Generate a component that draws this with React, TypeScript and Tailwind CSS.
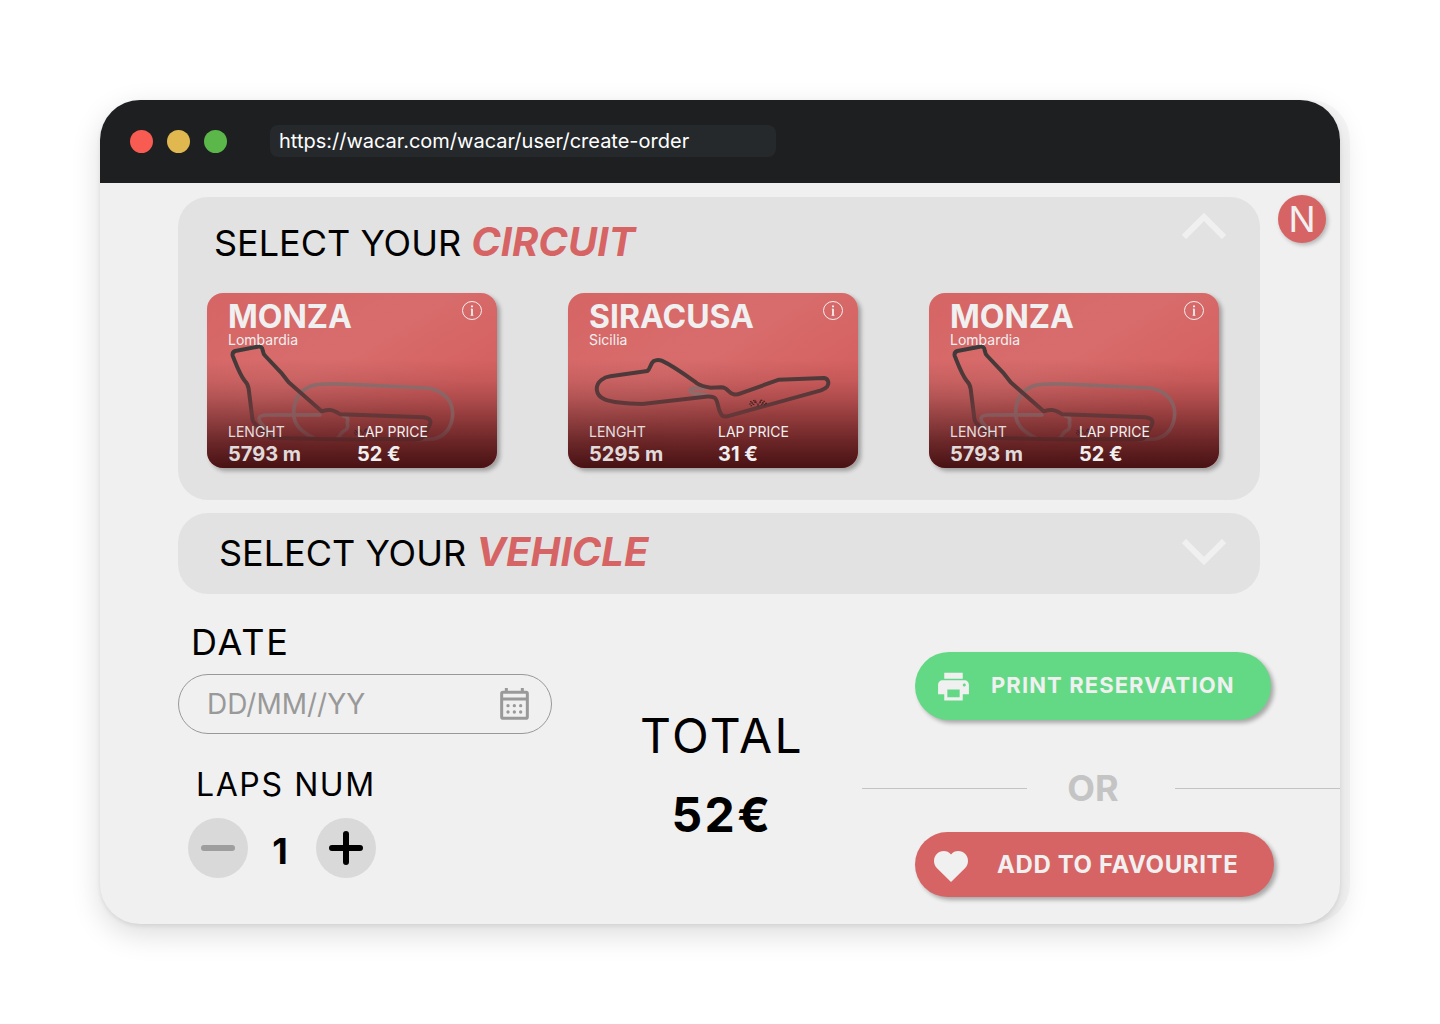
import { useState, type ReactNode } from "react";
import { MdPrint } from "react-icons/md";

type Circuit = {
  name: string;
  region: string;
  length: string;
  price: string;
  track: "monza" | "siracusa";
};

const circuits: Circuit[] = [
  { name: "MONZA", region: "Lombardia", length: "5793 m", price: "52 €", track: "monza" },
  { name: "SIRACUSA", region: "Sicilia", length: "5295 m", price: "31 €", track: "siracusa" },
  { name: "MONZA", region: "Lombardia", length: "5793 m", price: "52 €", track: "monza" },
];

/* Pair of crossed chequered flags marking the start line */
function Flags({ x, y }: { x: number; y: number }) {
  return (
    <g transform={`translate(${x} ${y})`} fill="#4a2426">
      <path d="M4 5h5v4H4zM13 2h5v4h-5zM8 9h5v4H8zM17 6h5v5h-5zM2 12h4v4H2zM12 13h5v4h-5zM6 17h4v4H6z" />
      <path d="M36 1h5v4h-5zM44 4h5v4h-5zM33 6h4v5h-4zM40 8h5v5h-5zM49 10h6v4h-6zM37 13h4v4h-4zM46 14h4v4h-4z" />
      <path d="M20 2l9 18M37 2L27 20" stroke="#4a2426" strokeWidth="2" />
    </g>
  );
}

/* Strokes that redden towards the bottom of the card */
function TrackPaints() {
  return (
    <defs>
      <linearGradient id="asphalt" gradientUnits="userSpaceOnUse" x1="0" y1="185" x2="0" y2="470">
        <stop offset="0" stopColor="#3c3a3a" />
        <stop offset="0.7" stopColor="#653839" />
        <stop offset="1" stopColor="#592628" />
      </linearGradient>
      <linearGradient id="old-asphalt" gradientUnits="userSpaceOnUse" x1="0" y1="290" x2="0" y2="470">
        <stop offset="0" stopColor="#8e6c6c" />
        <stop offset="0.6" stopColor="#86585a" />
        <stop offset="1" stopColor="#673436" />
      </linearGradient>
    </defs>
  );
}

function MonzaTrack() {
  return (
    <svg viewBox="21 24 870 525" className="absolute inset-0 h-full w-full" fill="none" strokeLinecap="round" strokeLinejoin="round" aria-hidden="true">
      <TrackPaints />
      <g stroke="url(#old-asphalt)" strokeWidth="11">
        <path d="M340 458C300 440 281 415 281 385C281 335 312 300 360 298C400 295 430 297 470 299L680 309C725 313 758 345 758 385C758 425 735 456 700 462L650 465" />
        <path d="M360 389.500L200 390C175 390 172 402 185 416L212 450M430 393C444 396 445 402 442 414C446 428 441 434 430 439C420 445 422 454 410 462" />
      </g>
      <path
        d="M494 464L212 459L168 419Q158 411 157 400L146 312Q144 296 134 287C120 270 110 242 98 212Q96 201 106 198L173 185Q187 183 188 196Q190 208 196 213L246 266L266 292L365 379Q378 375 390 375C404 375 410 384 422 388L670 397C690 399 695 408 689 420L673 451Q667 463 650 463L508 462"
        stroke="url(#asphalt)"
        strokeWidth="12"
      />
      <Flags x={460} y={430} />
    </svg>
  );
}

function SiracusaTrack() {
  return (
    <svg viewBox="27 24 870 525" className="absolute inset-0 h-full w-full" fill="none" strokeLinecap="round" strokeLinejoin="round" aria-hidden="true">
      <path d="M440 310H405C390 310 390 322 405 325L450 331" stroke="#8e6c6c" strokeWidth="11" />
      <path
        d="M265 258C274 252 274 236 283 229Q295 222 308 227C345 244 382 272 414 295Q428 304 455 308L487 307C508 308 508 325 524 328Q534 330 545 325L660 284L795 279C809 281 811 296 804 305Q799 311 786 316L505 394C490 396 488 392 482 379C474 356 476 343 466 338Q456 334 440 335L250 357C205 356 160 352 137 343C108 332 107 301 127 285Q138 276 154 274Z"
        stroke="url(#asphalt)"
        strokeWidth="12"
      />
      <Flags x={569} y={343} />
    </svg>
  );
}

function CircuitCard({ circuit }: { circuit: Circuit }) {
  return (
    <article className="relative h-[175px] w-[290px] overflow-hidden rounded-2xl bg-linear-to-br from-[#d66565] via-[#d86c6c] via-40% to-[#d56161] to-70% text-[#f0f0f0] shadow-[3px_3px_4px_rgba(0,0,0,0.3)]">
      <div className="absolute inset-0 bg-[linear-gradient(to_bottom,rgba(66,14,16,0)_38%,rgba(66,14,16,0.1)_50%,rgba(66,14,16,0.25)_60%,rgba(66,14,16,0.48)_72%,rgba(66,14,16,0.72)_85%,rgba(66,14,16,0.96)_100%)]" />
      {circuit.track === "monza" ? <MonzaTrack /> : <SiracusaTrack />}
      <div className="relative flex h-full flex-col justify-between pt-2 pr-3.5 pb-0.5 pl-[21px]">
        <div className="flex items-start justify-between">
          <div>
            <h3 className="text-[32px] leading-8 font-bold">{circuit.name}</h3>
            <p className="text-sm leading-[14px] font-normal">{circuit.region}</p>
          </div>
          <button type="button" aria-label={`About ${circuit.name}`}>
            <svg viewBox="0 0 22 20" className="h-5 w-[22px]" fill="none" stroke="#f0f0f0" aria-hidden="true">
              <ellipse cx="11" cy="9.5" rx="9.5" ry="9" />
              <path d="M11 7.800V14.500" strokeWidth="1.8" />
              <path d="M9.800 8.200H11M9.500 14.300h3" strokeWidth="0.8" />
              <path d="M10 5.300h2" strokeWidth="1.8" />
            </svg>
          </button>
        </div>
        <dl className="flex">
          <div className="w-[129px] opacity-90">
            <dt className="text-sm leading-5 font-normal">LENGHT</dt>
            <dd className="text-xl leading-6 font-bold">{circuit.length}</dd>
          </div>
          <div>
            <dt className="text-sm leading-5 font-normal">LAP PRICE</dt>
            <dd className="text-xl leading-6 font-bold">{circuit.price}</dd>
          </div>
        </dl>
      </div>
    </article>
  );
}

function Chevron({ up }: { up?: boolean }) {
  return (
    <svg viewBox="0 0 44 26" className="h-[26px] w-11" fill="none" stroke="#f0f0f0" strokeWidth="6" aria-hidden="true">
      <path d={up ? "M2 24L22 4L42 24" : "M2 2L22 22L42 2"} />
    </svg>
  );
}

function Heading({ children }: { children: ReactNode }) {
  return (
    <h2 className="text-4xl leading-[48px] font-normal whitespace-nowrap text-black">
      SELECT YOUR <em className="text-[40px] font-bold text-[#d76464]">{children}</em>
    </h2>
  );
}

function CalendarIcon() {
  return (
    <svg viewBox="989 234 87 96" className="h-8 w-[29px]" fill="none" stroke="#999" aria-hidden="true">
      <rect x="994" y="247" width="77" height="78" rx="4" strokeWidth="9" />
      <path d="M994 267h77" strokeWidth="9" />
      <path d="M1008 234v12M1056 234v12" strokeWidth="9" />
      <g fill="#999" stroke="none">
        {[1013, 1032, 1051].map((x) => (
          <g key={x}>
            <circle cx={x} cy="287" r="5" />
            <circle cx={x} cy="306" r="5" />
          </g>
        ))}
      </g>
    </svg>
  );
}

export default function App() {
  const [laps, setLaps] = useState(1);

  return (
    <div className="min-h-screen bg-white p-[100px] font-['Inter',sans-serif]">
      <div className="overflow-hidden rounded-[40px] bg-[#f0f0f0] pb-[27px] shadow-[0_2px_4px_rgba(0,0,0,0.08),10px_0_0_rgba(0,0,0,0.03),0_10px_30px_rgba(0,0,0,0.14)]">
        <header className="flex h-[83px] items-center bg-[#1e1f21] pb-px pl-[30px]">
          <div className="flex gap-3.5">
            <span className="size-[23px] rounded-full bg-[#f75b52]" />
            <span className="size-[23px] rounded-full bg-[#e0b84f]" />
            <span className="size-[23px] rounded-full bg-[#5cb74a]" />
          </div>
          <input
            aria-label="Address"
            defaultValue="https://wacar.com/wacar/user/create-order"
            className="ml-[43px] h-8 w-[506px] rounded-lg bg-[#25292c] px-[9px] text-xl font-normal text-white outline-none"
          />
        </header>

        <main>
          <div className="flex items-start pt-3 pr-3.5 pl-[78px]">
            <div className="mt-0.5 flex flex-1 flex-col gap-[13px]">
              <section className="rounded-[30px] bg-[#e2e2e2] pt-4 pr-[41px] pb-8 pl-[29px]">
                <div className="flex items-start justify-between pl-[7px]">
                  <div className="pt-[5px]">
                    <Heading>CIRCUIT</Heading>
                  </div>
                  <button type="button" aria-label="Collapse circuits" aria-expanded="true" className="-mr-[7px]">
                    <Chevron up />
                  </button>
                </div>
                <div className="mt-[26px] flex justify-between gap-4">
                  {circuits.map((circuit, index) => (
                    <CircuitCard key={index} circuit={circuit} />
                  ))}
                </div>
              </section>
              <section className="flex h-[81px] items-center justify-between rounded-[30px] bg-[#e2e2e2] pr-[34px] pb-[3px] pl-[41px]">
                <Heading>VEHICLE</Heading>
                <button type="button" aria-label="Expand vehicles" aria-expanded="false">
                  <Chevron />
                </button>
              </section>
            </div>
            <button
              type="button"
              aria-label="Account N"
              className="ml-[18px] size-12 rounded-full bg-[#d76464] text-4xl leading-[48px] font-normal text-[#f0f0f0] shadow-[2px_2px_4px_rgba(0,0,0,0.25)]"
            >
              N
            </button>
          </div>

          <form className="flex items-start justify-between pl-[78px]" onSubmit={(event) => event.preventDefault()}>
            <div className="w-[374px] pt-6">
              <label htmlFor="date" className="block pl-[13px] text-4xl leading-[48px] font-normal tracking-wider text-black">
                DATE
              </label>
              <div className="mt-2 flex h-[60px] items-center rounded-full border border-[#999] pr-[22px] pl-7">
                <input
                  id="date"
                  type="text"
                  placeholder="DD/MM//YY"
                  className="w-0 flex-1 bg-transparent text-[28px] font-normal text-black outline-none placeholder:text-[#999]"
                />
                <CalendarIcon />
              </div>
              <h2 className="mt-[29px] pl-[18px] text-[32px] leading-[44px] font-normal tracking-wider text-black">LAPS NUM</h2>
              <div className="mt-[11px] flex items-center pl-2.5">
                <button
                  type="button"
                  aria-label="Fewer laps"
                  onClick={() => setLaps(Math.max(1, laps - 1))}
                  className="flex size-[60px] items-center justify-center rounded-full bg-[#d9d9d9]"
                >
                  <span className="h-1.5 w-[34px] rounded-full bg-[#9e9e9e]" />
                </button>
                <output className="w-[68px] pt-1.5 pr-1 text-center text-4xl font-bold text-black">{laps}</output>
                <button
                  type="button"
                  aria-label="More laps"
                  onClick={() => setLaps(laps + 1)}
                  className="flex size-[60px] items-center justify-center rounded-full bg-[#d9d9d9]"
                >
                  <svg viewBox="0 0 34 34" className="size-[34px]" stroke="black" strokeWidth="6" strokeLinecap="round" aria-hidden="true">
                    <path d="M3 17h28M17 3v28" />
                  </svg>
                </button>
              </div>
            </div>

            <div className="pt-28 pl-[30px] text-center text-5xl leading-[60px] text-black">
              <h2 className="font-normal tracking-wider">TOTAL</h2>
              <p className="mt-[19px] font-bold tracking-wider">52€</p>
            </div>

            <div className="w-[478px] pt-[58px]">
              <button
                type="submit"
                className="ml-[53px] flex h-[68px] w-[356px] items-center rounded-full bg-[#63d985] pb-0.5 pl-5 text-[22px] font-bold tracking-wider whitespace-nowrap text-[#f0f0f0] shadow-[3px_3px_4px_rgba(0,0,0,0.3)]"
              >
                <MdPrint className="mt-0.5 mr-[19px] size-[37px]" aria-hidden="true" />
                PRINT RESERVATION
              </button>
              <div className="mt-14 mb-8 flex h-6 items-center">
                <span className="h-px flex-1 bg-[#c4c4c4]" />
                <span className="w-[148px] pr-4 text-center text-4xl font-bold text-[#c4c4c4]">OR</span>
                <span className="h-px flex-1 bg-[#c4c4c4]" />
              </div>
              <button
                type="button"
                className="ml-[53px] flex h-[65px] w-[359px] items-center rounded-full bg-[#d76464] pl-[19px] text-2xl font-bold tracking-wide whitespace-nowrap text-[#f0f0f0] shadow-[3px_3px_4px_rgba(0,0,0,0.3)]"
              >
                <svg viewBox="0 0 34 31" className="mt-1 mr-[29px] h-[31px] w-[34px]" fill="currentColor" aria-hidden="true">
                  <path d="M17 31L2.8 17C-.8 13.300-.9 7 2.500 3.300C6.500-1 13.500-1 17 3.600C20.500-1 27.500-1 31.500 3.300C34.900 7 34.800 13.300 31.200 17Z" />
                </svg>
                ADD TO FAVOURITE
              </button>
            </div>
          </form>
        </main>
      </div>
    </div>
  );
}
